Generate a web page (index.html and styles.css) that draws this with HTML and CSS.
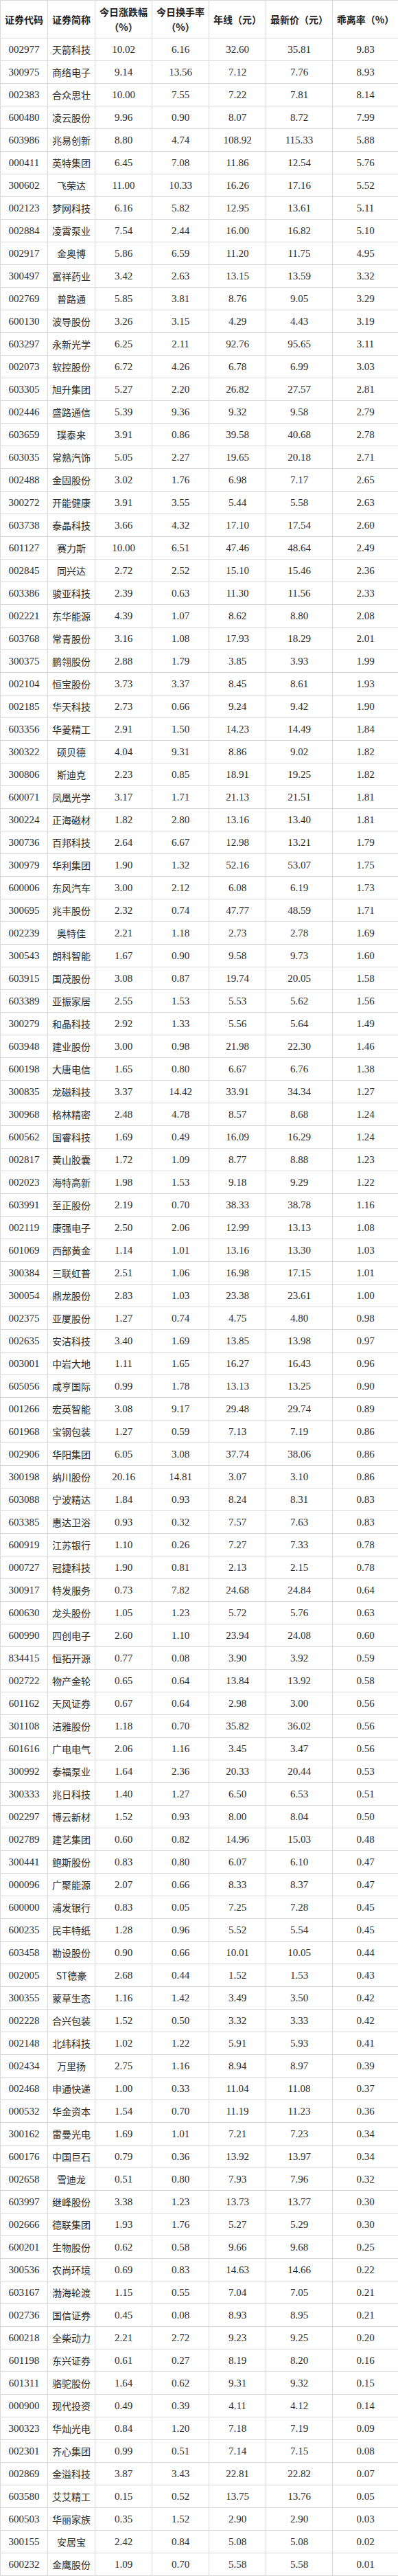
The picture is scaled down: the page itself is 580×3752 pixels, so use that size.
FILE: index.html
```html
<!DOCTYPE html>
<html lang="zh-CN">
<head>
<meta charset="utf-8">
<title>乖离率排行</title>
<link rel="stylesheet" href="styles.css">
</head>
<body>
<table class="grid">
<colgroup>
<col class="c-code"><col class="c-name"><col class="c-chg"><col class="c-turn"><col class="c-ma"><col class="c-price"><col class="c-bias">
</colgroup>
<thead>
<tr><th>证券代码</th><th>证券简称</th><th>今日涨跌幅<br>（%）</th><th>今日换手率<br>（%）</th><th>年线（元）</th><th>最新价（元）</th><th>乖离率（%）</th></tr>
</thead>
<tbody>
<tr><td>002977</td><td class="nm">天箭科技</td><td>10.02</td><td>6.16</td><td>32.60</td><td>35.81</td><td>9.83</td></tr>
<tr><td>300975</td><td class="nm">商络电子</td><td>9.14</td><td>13.56</td><td>7.12</td><td>7.76</td><td>8.93</td></tr>
<tr><td>002383</td><td class="nm">合众思壮</td><td>10.00</td><td>7.55</td><td>7.22</td><td>7.81</td><td>8.14</td></tr>
<tr><td>600480</td><td class="nm">凌云股份</td><td>9.96</td><td>0.90</td><td>8.07</td><td>8.72</td><td>7.99</td></tr>
<tr><td>603986</td><td class="nm">兆易创新</td><td>8.80</td><td>4.74</td><td>108.92</td><td>115.33</td><td>5.88</td></tr>
<tr><td>000411</td><td class="nm">英特集团</td><td>6.45</td><td>7.08</td><td>11.86</td><td>12.54</td><td>5.76</td></tr>
<tr><td>300602</td><td class="nm">飞荣达</td><td>11.00</td><td>10.33</td><td>16.26</td><td>17.16</td><td>5.52</td></tr>
<tr><td>002123</td><td class="nm">梦网科技</td><td>6.16</td><td>5.82</td><td>12.95</td><td>13.61</td><td>5.11</td></tr>
<tr><td>002884</td><td class="nm">凌霄泵业</td><td>7.54</td><td>2.44</td><td>16.00</td><td>16.82</td><td>5.10</td></tr>
<tr><td>002917</td><td class="nm">金奥博</td><td>5.86</td><td>6.59</td><td>11.20</td><td>11.75</td><td>4.95</td></tr>
<tr><td>300497</td><td class="nm">富祥药业</td><td>3.42</td><td>2.63</td><td>13.15</td><td>13.59</td><td>3.32</td></tr>
<tr><td>002769</td><td class="nm">普路通</td><td>5.85</td><td>3.81</td><td>8.76</td><td>9.05</td><td>3.29</td></tr>
<tr><td>600130</td><td class="nm">波导股份</td><td>3.26</td><td>3.15</td><td>4.29</td><td>4.43</td><td>3.19</td></tr>
<tr><td>603297</td><td class="nm">永新光学</td><td>6.25</td><td>2.11</td><td>92.76</td><td>95.65</td><td>3.11</td></tr>
<tr><td>002073</td><td class="nm">软控股份</td><td>6.72</td><td>4.26</td><td>6.78</td><td>6.99</td><td>3.03</td></tr>
<tr><td>603305</td><td class="nm">旭升集团</td><td>5.27</td><td>2.20</td><td>26.82</td><td>27.57</td><td>2.81</td></tr>
<tr><td>002446</td><td class="nm">盛路通信</td><td>5.39</td><td>9.36</td><td>9.32</td><td>9.58</td><td>2.79</td></tr>
<tr><td>603659</td><td class="nm">璞泰来</td><td>3.91</td><td>0.86</td><td>39.58</td><td>40.68</td><td>2.78</td></tr>
<tr><td>603035</td><td class="nm">常熟汽饰</td><td>5.05</td><td>2.27</td><td>19.65</td><td>20.18</td><td>2.71</td></tr>
<tr><td>002488</td><td class="nm">金固股份</td><td>3.02</td><td>1.76</td><td>6.98</td><td>7.17</td><td>2.65</td></tr>
<tr><td>300272</td><td class="nm">开能健康</td><td>3.91</td><td>3.55</td><td>5.44</td><td>5.58</td><td>2.63</td></tr>
<tr><td>603738</td><td class="nm">泰晶科技</td><td>3.66</td><td>4.32</td><td>17.10</td><td>17.54</td><td>2.60</td></tr>
<tr><td>601127</td><td class="nm">赛力斯</td><td>10.00</td><td>6.51</td><td>47.46</td><td>48.64</td><td>2.49</td></tr>
<tr><td>002845</td><td class="nm">同兴达</td><td>2.72</td><td>2.52</td><td>15.10</td><td>15.46</td><td>2.36</td></tr>
<tr><td>603386</td><td class="nm">骏亚科技</td><td>2.39</td><td>0.63</td><td>11.30</td><td>11.56</td><td>2.33</td></tr>
<tr><td>002221</td><td class="nm">东华能源</td><td>4.39</td><td>1.07</td><td>8.62</td><td>8.80</td><td>2.08</td></tr>
<tr><td>603768</td><td class="nm">常青股份</td><td>3.16</td><td>1.08</td><td>17.93</td><td>18.29</td><td>2.01</td></tr>
<tr><td>300375</td><td class="nm">鹏翎股份</td><td>2.88</td><td>1.79</td><td>3.85</td><td>3.93</td><td>1.99</td></tr>
<tr><td>002104</td><td class="nm">恒宝股份</td><td>3.73</td><td>3.37</td><td>8.45</td><td>8.61</td><td>1.93</td></tr>
<tr><td>002185</td><td class="nm">华天科技</td><td>2.73</td><td>0.66</td><td>9.24</td><td>9.42</td><td>1.90</td></tr>
<tr><td>603356</td><td class="nm">华菱精工</td><td>2.91</td><td>1.50</td><td>14.23</td><td>14.49</td><td>1.84</td></tr>
<tr><td>300322</td><td class="nm">硕贝德</td><td>4.04</td><td>9.31</td><td>8.86</td><td>9.02</td><td>1.82</td></tr>
<tr><td>300806</td><td class="nm">斯迪克</td><td>2.23</td><td>0.85</td><td>18.91</td><td>19.25</td><td>1.82</td></tr>
<tr><td>600071</td><td class="nm">凤凰光学</td><td>3.17</td><td>1.71</td><td>21.13</td><td>21.51</td><td>1.81</td></tr>
<tr><td>300224</td><td class="nm">正海磁材</td><td>1.82</td><td>2.80</td><td>13.16</td><td>13.40</td><td>1.81</td></tr>
<tr><td>300736</td><td class="nm">百邦科技</td><td>2.64</td><td>6.67</td><td>12.98</td><td>13.21</td><td>1.79</td></tr>
<tr><td>300979</td><td class="nm">华利集团</td><td>1.90</td><td>1.32</td><td>52.16</td><td>53.07</td><td>1.75</td></tr>
<tr><td>600006</td><td class="nm">东风汽车</td><td>3.00</td><td>2.12</td><td>6.08</td><td>6.19</td><td>1.73</td></tr>
<tr><td>300695</td><td class="nm">兆丰股份</td><td>2.32</td><td>0.74</td><td>47.77</td><td>48.59</td><td>1.71</td></tr>
<tr><td>002239</td><td class="nm">奥特佳</td><td>2.21</td><td>1.18</td><td>2.73</td><td>2.78</td><td>1.69</td></tr>
<tr><td>300543</td><td class="nm">朗科智能</td><td>1.67</td><td>0.90</td><td>9.58</td><td>9.73</td><td>1.60</td></tr>
<tr><td>603915</td><td class="nm">国茂股份</td><td>3.08</td><td>0.87</td><td>19.74</td><td>20.05</td><td>1.58</td></tr>
<tr><td>603389</td><td class="nm">亚振家居</td><td>2.55</td><td>1.53</td><td>5.53</td><td>5.62</td><td>1.56</td></tr>
<tr><td>300279</td><td class="nm">和晶科技</td><td>2.92</td><td>1.33</td><td>5.56</td><td>5.64</td><td>1.49</td></tr>
<tr><td>603948</td><td class="nm">建业股份</td><td>3.00</td><td>0.98</td><td>21.98</td><td>22.30</td><td>1.46</td></tr>
<tr><td>600198</td><td class="nm">大唐电信</td><td>1.65</td><td>0.80</td><td>6.67</td><td>6.76</td><td>1.38</td></tr>
<tr><td>300835</td><td class="nm">龙磁科技</td><td>3.37</td><td>14.42</td><td>33.91</td><td>34.34</td><td>1.27</td></tr>
<tr><td>300968</td><td class="nm">格林精密</td><td>2.48</td><td>4.78</td><td>8.57</td><td>8.68</td><td>1.24</td></tr>
<tr><td>600562</td><td class="nm">国睿科技</td><td>1.69</td><td>0.49</td><td>16.09</td><td>16.29</td><td>1.24</td></tr>
<tr><td>002817</td><td class="nm">黄山胶囊</td><td>1.72</td><td>1.09</td><td>8.77</td><td>8.88</td><td>1.23</td></tr>
<tr><td>002023</td><td class="nm">海特高新</td><td>1.98</td><td>1.53</td><td>9.18</td><td>9.29</td><td>1.22</td></tr>
<tr><td>603991</td><td class="nm">至正股份</td><td>2.19</td><td>0.70</td><td>38.33</td><td>38.78</td><td>1.16</td></tr>
<tr><td>002119</td><td class="nm">康强电子</td><td>2.50</td><td>2.06</td><td>12.99</td><td>13.13</td><td>1.08</td></tr>
<tr><td>601069</td><td class="nm">西部黄金</td><td>1.14</td><td>1.01</td><td>13.16</td><td>13.30</td><td>1.03</td></tr>
<tr><td>300384</td><td class="nm">三联虹普</td><td>2.51</td><td>1.06</td><td>16.98</td><td>17.15</td><td>1.01</td></tr>
<tr><td>300054</td><td class="nm">鼎龙股份</td><td>2.83</td><td>1.03</td><td>23.38</td><td>23.61</td><td>1.00</td></tr>
<tr><td>002375</td><td class="nm">亚厦股份</td><td>1.27</td><td>0.74</td><td>4.75</td><td>4.80</td><td>0.98</td></tr>
<tr><td>002635</td><td class="nm">安洁科技</td><td>3.40</td><td>1.69</td><td>13.85</td><td>13.98</td><td>0.97</td></tr>
<tr><td>003001</td><td class="nm">中岩大地</td><td>1.11</td><td>1.65</td><td>16.27</td><td>16.43</td><td>0.96</td></tr>
<tr><td>605056</td><td class="nm">咸亨国际</td><td>0.99</td><td>1.78</td><td>13.13</td><td>13.25</td><td>0.90</td></tr>
<tr><td>001266</td><td class="nm">宏英智能</td><td>3.08</td><td>9.17</td><td>29.48</td><td>29.74</td><td>0.89</td></tr>
<tr><td>601968</td><td class="nm">宝钢包装</td><td>1.27</td><td>0.59</td><td>7.13</td><td>7.19</td><td>0.86</td></tr>
<tr><td>002906</td><td class="nm">华阳集团</td><td>6.05</td><td>3.08</td><td>37.74</td><td>38.06</td><td>0.86</td></tr>
<tr><td>300198</td><td class="nm">纳川股份</td><td>20.16</td><td>14.81</td><td>3.07</td><td>3.10</td><td>0.86</td></tr>
<tr><td>603088</td><td class="nm">宁波精达</td><td>1.84</td><td>0.93</td><td>8.24</td><td>8.31</td><td>0.83</td></tr>
<tr><td>603385</td><td class="nm">惠达卫浴</td><td>0.93</td><td>0.32</td><td>7.57</td><td>7.63</td><td>0.83</td></tr>
<tr><td>600919</td><td class="nm">江苏银行</td><td>1.10</td><td>0.26</td><td>7.27</td><td>7.33</td><td>0.78</td></tr>
<tr><td>000727</td><td class="nm">冠捷科技</td><td>1.90</td><td>0.81</td><td>2.13</td><td>2.15</td><td>0.78</td></tr>
<tr><td>300917</td><td class="nm">特发服务</td><td>0.73</td><td>7.82</td><td>24.68</td><td>24.84</td><td>0.64</td></tr>
<tr><td>600630</td><td class="nm">龙头股份</td><td>1.05</td><td>1.23</td><td>5.72</td><td>5.76</td><td>0.63</td></tr>
<tr><td>600990</td><td class="nm">四创电子</td><td>2.60</td><td>1.10</td><td>23.94</td><td>24.08</td><td>0.60</td></tr>
<tr><td>834415</td><td class="nm">恒拓开源</td><td>0.77</td><td>0.08</td><td>3.90</td><td>3.92</td><td>0.59</td></tr>
<tr><td>002722</td><td class="nm">物产金轮</td><td>0.65</td><td>0.64</td><td>13.84</td><td>13.92</td><td>0.58</td></tr>
<tr><td>601162</td><td class="nm">天风证券</td><td>0.67</td><td>0.64</td><td>2.98</td><td>3.00</td><td>0.56</td></tr>
<tr><td>301108</td><td class="nm">洁雅股份</td><td>1.18</td><td>0.70</td><td>35.82</td><td>36.02</td><td>0.56</td></tr>
<tr><td>601616</td><td class="nm">广电电气</td><td>2.06</td><td>1.16</td><td>3.45</td><td>3.47</td><td>0.56</td></tr>
<tr><td>300992</td><td class="nm">泰福泵业</td><td>1.64</td><td>2.36</td><td>20.33</td><td>20.44</td><td>0.53</td></tr>
<tr><td>300333</td><td class="nm">兆日科技</td><td>1.40</td><td>1.27</td><td>6.50</td><td>6.53</td><td>0.51</td></tr>
<tr><td>002297</td><td class="nm">博云新材</td><td>1.52</td><td>0.93</td><td>8.00</td><td>8.04</td><td>0.50</td></tr>
<tr><td>002789</td><td class="nm">建艺集团</td><td>0.60</td><td>0.82</td><td>14.96</td><td>15.03</td><td>0.48</td></tr>
<tr><td>300441</td><td class="nm">鲍斯股份</td><td>0.83</td><td>0.80</td><td>6.07</td><td>6.10</td><td>0.47</td></tr>
<tr><td>000096</td><td class="nm">广聚能源</td><td>2.07</td><td>0.66</td><td>8.33</td><td>8.37</td><td>0.47</td></tr>
<tr><td>600000</td><td class="nm">浦发银行</td><td>0.83</td><td>0.05</td><td>7.25</td><td>7.28</td><td>0.45</td></tr>
<tr><td>600235</td><td class="nm">民丰特纸</td><td>1.28</td><td>0.96</td><td>5.52</td><td>5.54</td><td>0.45</td></tr>
<tr><td>603458</td><td class="nm">勘设股份</td><td>0.90</td><td>0.66</td><td>10.01</td><td>10.05</td><td>0.44</td></tr>
<tr><td>002005</td><td class="nm">ST德豪</td><td>2.68</td><td>0.44</td><td>1.52</td><td>1.53</td><td>0.43</td></tr>
<tr><td>300355</td><td class="nm">蒙草生态</td><td>1.16</td><td>1.42</td><td>3.49</td><td>3.50</td><td>0.42</td></tr>
<tr><td>002228</td><td class="nm">合兴包装</td><td>1.52</td><td>0.50</td><td>3.32</td><td>3.33</td><td>0.42</td></tr>
<tr><td>002148</td><td class="nm">北纬科技</td><td>1.02</td><td>1.22</td><td>5.91</td><td>5.93</td><td>0.41</td></tr>
<tr><td>002434</td><td class="nm">万里扬</td><td>2.75</td><td>1.16</td><td>8.94</td><td>8.97</td><td>0.39</td></tr>
<tr><td>002468</td><td class="nm">申通快递</td><td>1.00</td><td>0.33</td><td>11.04</td><td>11.08</td><td>0.37</td></tr>
<tr><td>000532</td><td class="nm">华金资本</td><td>1.54</td><td>0.70</td><td>11.19</td><td>11.23</td><td>0.36</td></tr>
<tr><td>300162</td><td class="nm">雷曼光电</td><td>1.69</td><td>1.01</td><td>7.21</td><td>7.23</td><td>0.34</td></tr>
<tr><td>600176</td><td class="nm">中国巨石</td><td>0.79</td><td>0.36</td><td>13.92</td><td>13.97</td><td>0.34</td></tr>
<tr><td>002658</td><td class="nm">雪迪龙</td><td>0.51</td><td>0.80</td><td>7.93</td><td>7.96</td><td>0.32</td></tr>
<tr><td>603997</td><td class="nm">继峰股份</td><td>3.38</td><td>1.23</td><td>13.73</td><td>13.77</td><td>0.30</td></tr>
<tr><td>002666</td><td class="nm">德联集团</td><td>1.93</td><td>1.76</td><td>5.27</td><td>5.29</td><td>0.30</td></tr>
<tr><td>600201</td><td class="nm">生物股份</td><td>0.62</td><td>0.58</td><td>9.66</td><td>9.68</td><td>0.25</td></tr>
<tr><td>300536</td><td class="nm">农尚环境</td><td>0.69</td><td>0.83</td><td>14.63</td><td>14.66</td><td>0.22</td></tr>
<tr><td>603167</td><td class="nm">渤海轮渡</td><td>1.15</td><td>0.55</td><td>7.04</td><td>7.05</td><td>0.21</td></tr>
<tr><td>002736</td><td class="nm">国信证券</td><td>0.45</td><td>0.08</td><td>8.93</td><td>8.95</td><td>0.21</td></tr>
<tr><td>600218</td><td class="nm">全柴动力</td><td>2.21</td><td>2.72</td><td>9.23</td><td>9.25</td><td>0.20</td></tr>
<tr><td>601198</td><td class="nm">东兴证券</td><td>0.61</td><td>0.27</td><td>8.19</td><td>8.20</td><td>0.16</td></tr>
<tr><td>601311</td><td class="nm">骆驼股份</td><td>1.64</td><td>0.62</td><td>9.31</td><td>9.32</td><td>0.15</td></tr>
<tr><td>000900</td><td class="nm">现代投资</td><td>0.49</td><td>0.39</td><td>4.11</td><td>4.12</td><td>0.14</td></tr>
<tr><td>300323</td><td class="nm">华灿光电</td><td>0.84</td><td>1.20</td><td>7.18</td><td>7.19</td><td>0.09</td></tr>
<tr><td>002301</td><td class="nm">齐心集团</td><td>0.99</td><td>0.51</td><td>7.14</td><td>7.15</td><td>0.08</td></tr>
<tr><td>002869</td><td class="nm">金溢科技</td><td>3.87</td><td>3.43</td><td>22.81</td><td>22.82</td><td>0.07</td></tr>
<tr><td>603580</td><td class="nm">艾艾精工</td><td>0.15</td><td>0.52</td><td>13.75</td><td>13.76</td><td>0.05</td></tr>
<tr><td>600503</td><td class="nm">华丽家族</td><td>0.35</td><td>1.52</td><td>2.90</td><td>2.90</td><td>0.03</td></tr>
<tr><td>300155</td><td class="nm">安居宝</td><td>2.42</td><td>0.84</td><td>5.08</td><td>5.08</td><td>0.02</td></tr>
<tr><td>600232</td><td class="nm">金鹰股份</td><td>1.09</td><td>0.70</td><td>5.58</td><td>5.58</td><td>0.01</td></tr>
</tbody>
</table>
</body>
</html>
```

FILE: styles.css
```css
html, body {
  margin: 0;
  padding: 0;
  background: #ffffff;
}

.grid {
  width: 580px;
  table-layout: fixed;
  border-collapse: separate;
  border-spacing: 0;
  border-top: 1px solid #dadada;
  border-left: 1px solid #dadada;
  color: #2b2b2b;
  font-family: "Liberation Serif", "Noto Sans CJK SC", serif;
  font-size: 15px;
}

.c-code { width: 69px; }
.c-name { width: 69px; }
.c-chg { width: 83px; }
.c-turn { width: 83px; }
.c-ma { width: 83px; }
.c-price { width: 97px; }
.c-bias { width: 96px; }

.grid th,
.grid td {
  border-right: 1px solid #dadada;
  border-bottom: 1px solid #dadada;
  padding: 5px 0;
  line-height: 22px;
  text-align: center;
  vertical-align: middle;
  white-space: nowrap;
}

.grid th {
  font-family: "Noto Sans CJK SC", sans-serif;
  font-weight: 700;
  font-size: 14px;
  color: #1f1f1f;
}

.grid td.nm {
  font-family: "Noto Sans CJK SC", sans-serif;
  font-size: 14px;
  font-weight: 400;
}
```
